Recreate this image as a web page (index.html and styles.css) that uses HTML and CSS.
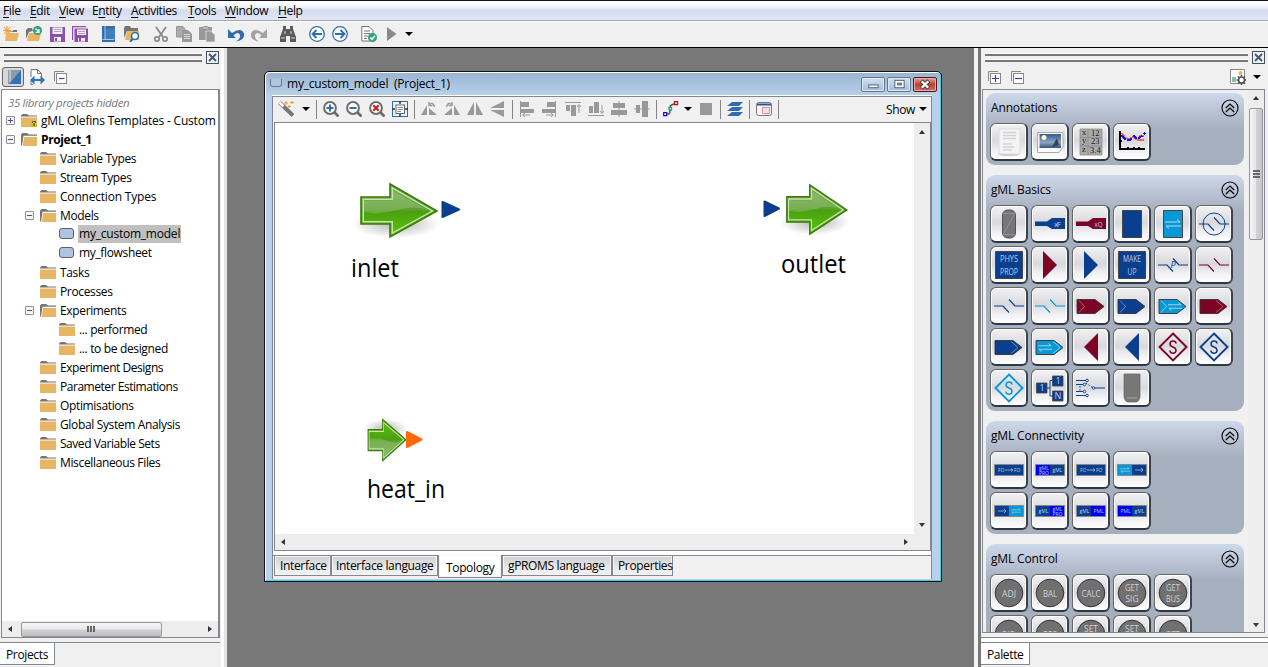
FILE: index.html
```html
<!DOCTYPE html>
<html lang="en">
<head>
<meta charset="utf-8">
<title>my_custom_model (Project_1)</title>
<link rel="stylesheet" href="styles.css">
</head>
<body>
<svg class="defs" width="0" height="0">
  <defs>
    <linearGradient id="green" x1="0" y1="0" x2="0" y2="1"><stop offset="0" stop-color="#7fb05f"/><stop offset=".48" stop-color="#5fa030"/><stop offset=".52" stop-color="#4aa010"/><stop offset="1" stop-color="#5fc40c"/></linearGradient>
    <radialGradient id="shade"><stop offset="0" stop-color="#000" stop-opacity=".5"/><stop offset="1" stop-color="#000" stop-opacity="0"/></radialGradient>
    <linearGradient id="sky" x1="0" y1="0" x2="0" y2="1"><stop offset="0" stop-color="#35588c"/><stop offset=".6" stop-color="#8ba5c5"/><stop offset="1" stop-color="#35517c"/></linearGradient>
  </defs>
  <symbol id="folder" viewBox="0 0 16 13"><path fill="#757575" d="M0 1.500 1.500 0H6L8 1.500H16V2.500H0z"/><path fill="#e8b565" d="M0 3.500H16V13H0z"/></symbol>
  <symbol id="folder-open" viewBox="0 0 16 13"><path fill="#757575" d="M0 1.500 1.500 0H6L8 1.500H16V2.800H2.500L1 12.500H0z"/><path fill="#e8b565" d="M3 4H16V13H1.800z"/></symbol>
  <symbol id="chev" viewBox="0 0 18 18"><circle cx="9" cy="9" r="8" fill="none" stroke="#000" stroke-width="1.100"/><path d="M4.800 9 9 5 13.200 9M4.800 13 9 9 13.200 13" fill="none" stroke="#000" stroke-width="1.200"/></symbol>
  <symbol id="arrow" viewBox="0 0 86 60"><ellipse cx="41" cy="44" rx="44" ry="14" fill="url(#shade)" opacity=".6"/><path d="M6 17H35V4L82 31 35 57V44H6z" fill="url(#green)" stroke="#3c7a0c" stroke-width="1.600"/><path d="M8.300 19.300H37.300V8L77.500 31 37.300 53V41.700H8.300z" fill="none" stroke="#c5e5af" stroke-width="1.400"/><path d="M9 32Q24 35 42 30T73 30L38 11V20.500H9z" fill="#fff" opacity=".16"/></symbol>
  <symbol id="ribbon" viewBox="0 0 30 30"><path d="M1 8.500H19L28 15.500 19 22.500H1z" fill="currentColor" stroke="#333" stroke-width=".9"/></symbol>
  <symbol id="swap" viewBox="0 0 16 10"><path d="M0 3H15M12 .5 15 3M16 7H1M4 9.500 1 7" fill="none" stroke="#b9d8e8" stroke-width="1"/></symbol>
  <symbol id="break" viewBox="0 0 30 30"><path d="M0 15H9L15 21.500M15 8.500 21 15H30" fill="none" stroke="currentColor" stroke-width="1.200"/></symbol>
  <symbol id="diamond" viewBox="0 0 30 30"><path d="M15 1.500 28.500 15 15 28.500 1.500 15z" fill="none" stroke="currentColor" stroke-width="1.900"/><path d="M18 11.500Q18 9 15 9 12 9 12 12 12 14 15 15 18 16 18 18.200 18 21.200 15 21.200 12 21.200 11.900 18.500" fill="none" stroke="currentColor" stroke-width="1.500"/></symbol>
</svg>

<nav class="menubar">
  <span><u>F</u>ile</span><span><u>E</u>dit</span><span><u>V</u>iew</span><span>E<u>n</u>tity</span><span><u>A</u>ctivities</span><span><u>T</u>ools</span><span><u>W</u>indow</span><span><u>H</u>elp</span>
</nav>

<div class="toolbar">
  <div class="tools">
    <svg viewBox="0 0 16 16"><path d="M5 5.500H9L10.500 4H14V6H5z" fill="#757575"/><path d="M3 7H16L14 15H2z" fill="#e8b565"/><path d="M4 0V9M0 4.500H8.500M1 1 7 8M7 1 1 8" stroke="#f0a030" stroke-width="1.100"/></svg>
    <svg viewBox="0 0 16 16"><path d="M0 13V4L2 2H6L7 5 3 6z" fill="#757575"/><path d="M3 7H15L13 15H1z" fill="#e8b565"/><circle cx="11.500" cy="4.500" r="4.500" fill="#2fa37c"/><path d="M9.500 2.500 13 6M13 3V6.300H9.700" stroke="#fff" stroke-width="1.200" fill="none"/></svg>
    <svg viewBox="0 0 16 16"><path d="M1 1H16V16H1z" fill="#8d4fae"/><path d="M3.500 1.500H13.500V8H3.500zM5 11H12V15.500H5z" fill="#f3edf6"/><path d="M5 3.500H12M5 5.500H12" stroke="#aaa"/><path d="M6 12H8V15H6z" fill="#8d4fae"/></svg>
    <svg viewBox="0 0 16 16"><path d="M0 0H14V1.200H1.200V14H0zM2.500 2.500H16V16H2.500z" fill="#8d4fae"/><path d="M5 3.500H14V9H5zM6 12H13V15.500H6z" fill="#f3edf6"/><path d="M6 5.500H13M6 7.500H13" stroke="#aaa"/><path d="M7 12H9V15H7z" fill="#8d4fae"/></svg>
  </div>
  <div class="tools">
    <svg viewBox="0 0 16 16"><path d="M1 0H14V16H1z" fill="#2e6eae"/><path d="M4.500 2.500H14V14H1.500V13H3.500z" fill="#3f7fbc"/><path d="M4 0V13M1.500 13.500H13" stroke="#cce0f2" stroke-width=".8"/></svg>
    <svg viewBox="0 0 16 16"><path d="M0 2V12L3 5H14V2H7L6 0H1z" fill="#757575"/><path d="M3 5H15V14H1z" fill="#e8b565"/><circle cx="11" cy="10" r="3.500" fill="#fff" stroke="#2e6eae" stroke-width="1.600"/><path d="M8.500 13 6 16" stroke="#2e6eae" stroke-width="2"/></svg>
  </div>
  <div class="tools gray">
    <svg viewBox="0 0 16 16"><path d="M3 1 10 11M13 1 6 11" stroke="#8a8a8a" stroke-width="1.800"/><circle cx="4" cy="13" r="2.200" fill="none" stroke="#8a8a8a" stroke-width="1.700"/><circle cx="12" cy="13" r="2.200" fill="none" stroke="#8a8a8a" stroke-width="1.700"/></svg>
    <svg viewBox="0 0 16 16"><path d="M.5.500H7L9 3V11H.5z" fill="#aaa" stroke="#999"/><path d="M6 4H12L16 8V16H6z" fill="#999"/><path d="M8 8.500H14M8 10.500H14M8 12.500H14" stroke="#ddd"/></svg>
    <svg viewBox="0 0 16 16"><path d="M0 1H3L5 0H8L10 1H13V14H0z" fill="#999"/><path d="M4 2H9" stroke="#ddd"/><path d="M7 5H12L16 9V16H7z" fill="#999" stroke="#eee" stroke-width=".7"/></svg>
  </div>
  <div class="tools">
    <svg viewBox="0 0 16 16"><path d="M0 3V12H8L5.500 9.500Q10 5 12 9 12.500 13 8 15.500 17 14 16 7.500 13 1 4 7z" fill="#2e6eae"/></svg>
    <svg viewBox="0 0 16 16"><path d="M16 3V12H8L10.500 9.500Q6 5 4 9 3.500 13 8 15.500-1 14 0 7.500 3 1 12 7z" fill="#a2a2a2"/></svg>
  </div>
  <div class="tools">
    <svg viewBox="0 0 16 16"><path d="M3 0H6V3H10V0H13V3L16 11V16H10V10H6V16H0V11L3 3z" fill="#5a5a5a"/><path d="M1 12H5M11 12H15M5 5V8M11 5V8" stroke="#d8d8d8"/></svg>
  </div>
  <div class="tools">
    <svg viewBox="0 0 16 16"><circle cx="8" cy="8" r="7.300" fill="#fff" stroke="#2e6eae" stroke-width="1.300"/><path d="M13 8H4M7.500 4 3.500 8 7.500 12" fill="none" stroke="#2e6eae" stroke-width="1.900"/></svg>
    <svg viewBox="0 0 16 16"><circle cx="8" cy="8" r="7.300" fill="#fff" stroke="#2e6eae" stroke-width="1.300"/><path d="M3 8H12M8.500 4 12.500 8 8.500 12" fill="none" stroke="#2e6eae" stroke-width="1.900"/></svg>
  </div>
  <div class="tools run">
    <svg viewBox="0 0 16 16"><path d="M.8.500H8L12 4.500V15H.8z" fill="#fff" stroke="#777"/><path d="M3 5H9M3 7.500H9M3 10H7M3 12.500H6" stroke="#777"/><circle cx="11.500" cy="11.500" r="4.500" fill="#2fa37c"/><path d="M9.300 11.500 11 13.300 14 9.800" stroke="#fff" stroke-width="1.500" fill="none"/></svg>
    <svg viewBox="0 0 16 16"><path d="M3 1V15L12.500 8z" fill="#8a8a8a"/></svg>
    <i class="drop"></i>
  </div>
</div>

<main class="workspace">
  <aside class="dock left">
    <div class="grip"><i></i><b><svg viewBox="0 0 9 9"><path d="M1 1 8 8M8 1 1 8" stroke="#4b5a70" stroke-width="2"/></svg></b></div>
    <div class="dock-tools">
      <span class="pressed"><svg viewBox="0 0 16 16"><path d="M2 1H15V15H2z" fill="#8e9aa8"/><path d="M15 1V15H3z" fill="#2e74b8"/><path d="M4 1V13" stroke="#dce6ef"/></svg></span>
      <svg viewBox="0 0 16 16"><path d="M2 8V.5H8.500L12.500 4.500V8M8.500.5V4.500H12.500M2 12V15.500H4" fill="#fff" stroke="#777"/><path d="M4 11H13" stroke="#2e74b8" stroke-width="2"/><path d="M5.500 6.500V15.500L1 11zM11.500 6.500V15.500L16 11z" fill="#2e74b8"/></svg>
      <svg viewBox="0 0 16 16"><path d="M2.500 12V2.500H12" fill="none" stroke="#888"/><rect x="4.500" y="4.500" width="10" height="10" fill="#fff" stroke="#888"/><path d="M7 9.500H12.500" stroke="#3d3da8" stroke-width="1.200"/></svg>
    </div>
    <div class="tree">
      <p class="hidden-note">35 library projects hidden</p>
      <ul>
        <li><i class="box plus"></i><svg class="f"><use href="#folder"/></svg><span class="wide">gML Olefins Templates - Custom</span><svg class="lock" viewBox="0 0 6 7"><path d="M1.500 3V1.500H4.500V3" fill="none" stroke="#555"/><path d="M0 3H6V7H0z" fill="#d8bc10"/><path d="M3 3.500V6" stroke="#222"/></svg></li>
        <li><i class="box"></i><svg class="f"><use href="#folder-open"/></svg><strong>Project_1</strong></li>
        <li class="l1"><svg class="f"><use href="#folder"/></svg><span>Variable Types</span></li>
        <li class="l1"><svg class="f"><use href="#folder"/></svg><span>Stream Types</span></li>
        <li class="l1"><svg class="f"><use href="#folder"/></svg><span class="wide">Connection Types</span></li>
        <li class="l1x"><i class="box"></i><svg class="f"><use href="#folder-open"/></svg><span>Models</span></li>
        <li class="l2"><i class="model"></i><span class="selected">my_custom_model</span></li>
        <li class="l2"><i class="model"></i><span>my_flowsheet</span></li>
        <li class="l1"><svg class="f"><use href="#folder"/></svg><span>Tasks</span></li>
        <li class="l1"><svg class="f"><use href="#folder"/></svg><span>Processes</span></li>
        <li class="l1x"><i class="box"></i><svg class="f"><use href="#folder-open"/></svg><span>Experiments</span></li>
        <li class="l2"><svg class="f"><use href="#folder"/></svg><span>... performed</span></li>
        <li class="l2"><svg class="f"><use href="#folder"/></svg><span>... to be designed</span></li>
        <li class="l1"><svg class="f"><use href="#folder"/></svg><span class="tight">Experiment Designs</span></li>
        <li class="l1"><svg class="f"><use href="#folder"/></svg><span class="tight">Parameter Estimations</span></li>
        <li class="l1"><svg class="f"><use href="#folder"/></svg><span>Optimisations</span></li>
        <li class="l1"><svg class="f"><use href="#folder"/></svg><span>Global System Analysis</span></li>
        <li class="l1"><svg class="f"><use href="#folder"/></svg><span class="tight">Saved Variable Sets</span></li>
        <li class="l1"><svg class="f"><use href="#folder"/></svg><span>Miscellaneous Files</span></li>
      </ul>
      <div class="hscroll"><i class="tri w"></i><b></b><i class="tri e"></i></div>
    </div>
    <div class="dock-tabs"><span>Projects</span></div>
  </aside>

  <section class="desktop">
    <div class="window">
      <header class="titlebar"><i class="win-icon"></i><h1>my_custom_model&nbsp; (Project_1)</h1>
        <div class="win-buttons">
          <b><svg viewBox="0 0 22 14"><rect x="6.500" y="7.500" width="10" height="3" fill="#fff" stroke="#4c586b"/></svg></b>
          <b><svg viewBox="0 0 22 14"><rect x="6.500" y="2.500" width="10" height="8" fill="#fff" stroke="#4c586b"/><rect x="9.500" y="5.500" width="4" height="2" fill="#9db7d4" stroke="#4c586b"/></svg></b>
          <b class="close"><svg viewBox="0 0 22 14"><path d="M7 3 15 11M15 3 7 11" stroke="#4c3a42" stroke-width="4.400"/><path d="M7.500 3.500 14.500 10.500M14.500 3.500 7.500 10.500" stroke="#fff" stroke-width="2.600"/></svg></b>
        </div>
      </header>
      <div class="frame">
        <div class="edit-tools">
          <div class="set wand">
            <svg viewBox="0 0 16 16"><path d="M1.500 1.500 15 14.500" stroke="#777" stroke-width="4"/><path d="M1.500 1.500 5.500 5.300" stroke="#fff" stroke-width="2.500"/><path d="M8 0V4M6 2H10M14 0V3M12 1.500H16M11 4V7M9.500 5.500H13" stroke="#efa030" stroke-width="1.200"/></svg><i class="drop"></i>
          </div>
          <div class="set">
            <svg viewBox="0 0 16 16"><circle cx="7" cy="7" r="5.900" fill="#fff" stroke="#6d6d6d" stroke-width="2"/><path d="M11 11 15.500 15.500" stroke="#6d6d6d" stroke-width="2.700"/><path d="M3.500 7H10.500M7 3.500V10.500" stroke="#2e6eae" stroke-width="2"/></svg>
            <svg viewBox="0 0 16 16"><circle cx="7" cy="7" r="5.900" fill="#fff" stroke="#6d6d6d" stroke-width="2"/><path d="M11 11 15.500 15.500" stroke="#6d6d6d" stroke-width="2.700"/><path d="M3.500 7H10.500" stroke="#2e6eae" stroke-width="2"/></svg>
            <svg viewBox="0 0 16 16"><circle cx="7" cy="7" r="5.900" fill="#fff" stroke="#6d6d6d" stroke-width="2"/><path d="M11 11 15.500 15.500" stroke="#6d6d6d" stroke-width="2.700"/><path d="M4.300 4.300 9.700 9.700M9.700 4.300 4.300 9.700" stroke="#c6251c" stroke-width="2.300"/></svg>
            <svg viewBox="0 0 16 16"><rect x=".5" y=".5" width="15" height="15" fill="#e8f0f8" stroke="#2e6eae"/><rect x="4" y="4" width="8.500" height="8.500" fill="#fff" stroke="#666"/><path d="M5.500 6.500H11M5.500 8.500H11M5.500 10.500H9" stroke="#888"/><path d="M8 0V3M8 13V16M0 8H3M13 8H16" stroke="#333" stroke-width="1.500"/></svg>
          </div>
          <div class="set g">
            <svg viewBox="0 0 16 16"><path d="M0 14 6 4V14zM8 14V7L16 14z"/><path d="M8 4Q12 0 13.500 6M8 1V4.500H11.500" fill="none" stroke="#999" stroke-width="1.400"/></svg>
            <svg viewBox="0 0 16 16"><path d="M16 14 10 4V14zM8 14V7L0 14z"/><path d="M8 4Q4 0 2.500 6M8 1V4.500H4.500" fill="none" stroke="#999" stroke-width="1.400"/></svg>
            <svg viewBox="0 0 16 16"><path d="M0 14 7 1V14zM9 14V1L16 14z"/></svg>
            <svg viewBox="0 0 16 16"><path d="M0 7 14 0V7zM0 9 14 16V9z"/></svg>
          </div>
          <div class="set g">
            <svg viewBox="0 0 16 16"><path d="M1 0H2V16H1zM2 1H10V6H2zM2 8H15V12H2z"/><path d="M11 14H4M6 12 3.500 14 6 16" fill="none" stroke="#999"/></svg>
            <svg viewBox="0 0 16 16"><path d="M13 0H14V16H13zM5 1H13V6H5zM0 8H13V12H0z"/><path d="M4 14H11M9 12 11.500 14 9 16" fill="none" stroke="#999"/></svg>
            <svg viewBox="0 0 16 16"><path d="M0 1H16V2H0zM1 4H5V10H1zM6 4H11V15H6z"/><path d="M14 12V4M12 6 14 3.500 16 6" fill="none" stroke="#999"/></svg>
            <svg viewBox="0 0 16 16"><path d="M0 14H16V15H0zM1 5H5V12H1zM6 1H11V12H6z"/><path d="M14 4V12M12 10 14 12.500 16 10" fill="none" stroke="#999"/></svg>
            <svg viewBox="0 0 16 16"><path d="M2 2H14V7H2zM0 9H16V14H0zM7.500 0H8.500V16H7.500z"/></svg>
            <svg viewBox="0 0 16 16"><path d="M2 4H6V12H2zM8 0H14V16H8zM0 7.500H16V8.500H0z"/></svg>
          </div>
          <div class="set line">
            <svg viewBox="0 0 16 16"><path d="M3 13H6Q7 12 7 10V6Q7 4 11 3" fill="none" stroke="#555" stroke-width="1.500"/><path d="M.7 11.700H3.700V14.700H.7z" fill="#fff" stroke="#1515b0" stroke-width="1.300"/><path d="M11.500.7H14.500V3.700H11.500z" fill="#fff" stroke="#b01010" stroke-width="1.300"/><path d="M6 6.500H8.500V9H6z" fill="#fff" stroke="#2fa37c" stroke-width="1.300"/></svg><i class="drop"></i>
            <svg viewBox="0 0 16 16"><path d="M3 2H15V14H3z" fill="#999"/></svg>
          </div>
          <div class="set"><svg viewBox="0 0 16 16"><path d="M5 1H16L12 5H0zM5 6H16L12 10H0zM5 11H16L12 15H0z" fill="#2e6eae"/></svg></div>
          <div class="set"><svg viewBox="0 0 16 16"><rect x=".5" y="1.500" width="15" height="13" rx="2" fill="#f6f6f6" stroke="#777"/><path d="M1 2.500H15V4.500H1z" fill="#2255a0"/><path d="M6.500 6.500H13.500V12.500H6.500z" fill="#f8e0e0" stroke="#d89090"/></svg></div>
          <div class="show">Show<i class="drop"></i></div>
        </div>
        <div class="canvas-box">
          <div class="canvas">
            <svg class="topology" viewBox="275 123 639 411">
              <use href="#arrow" x="355" y="180" width="86" height="60"/>
              <path d="M442.500 202 459 209.500 442.500 217z" fill="#0a3f8f" stroke="#0a3f8f" stroke-width="2" stroke-linejoin="round"/>
              <text x="351" y="276.500" textLength="48" lengthAdjust="spacingAndGlyphs">inlet</text>
              <path d="M764.500 201.500 779 208.500 764.500 216z" fill="#0a3f8f" stroke="#0a3f8f" stroke-width="2" stroke-linejoin="round"/>
              <svg x="782" y="181" width="68" height="56" viewBox="0 0 86 60" preserveAspectRatio="none"><use href="#arrow" width="86" height="60"/></svg>
              <text x="781" y="272.500" textLength="65" lengthAdjust="spacingAndGlyphs">outlet</text>
              <g transform="translate(365 464) scale(1 -1)"><svg width="43" height="47" viewBox="0 0 86 60" preserveAspectRatio="none"><use href="#arrow" width="86" height="60"/></svg></g>
              <path d="M407 432 421.500 439.500 407 447z" fill="#ff6a08" stroke="#ff6a08" stroke-width="2" stroke-linejoin="round"/>
              <text x="367" y="497.500" textLength="78" lengthAdjust="spacingAndGlyphs">heat_in</text>
            </svg>
            <div class="vscroll"><i class="tri n"></i><i class="tri s"></i></div>
          </div>
          <div class="hscroll"><i class="tri w"></i><i class="tri e"></i></div>
        </div>
        <div class="sheet-tabs"><span class="t1">Interface</span><span class="t2">Interface language</span><span class="on">Topology</span><span class="t4">gPROMS language</span><span class="t5">Properties</span></div>
      </div>
    </div>
  </section>

  <aside class="dock right">
    <div class="grip"><i></i><b><svg viewBox="0 0 9 9"><path d="M1 1 8 8M8 1 1 8" stroke="#4b5a70" stroke-width="2"/></svg></b></div>
    <div class="dock-tools">
      <svg viewBox="0 0 16 16"><path d="M2.500 12V2.500H12" fill="none" stroke="#888"/><rect x="4.500" y="4.500" width="10" height="10" fill="#fff" stroke="#888"/><path d="M6 9.500H13M9.500 6V13" stroke="#3d3da8" stroke-width="1.200"/></svg>
      <svg viewBox="0 0 16 16"><path d="M2.500 12V2.500H12" fill="none" stroke="#888"/><rect x="4.500" y="4.500" width="10" height="10" fill="#fff" stroke="#888"/><path d="M6 9.500H13" stroke="#3d3da8" stroke-width="1.200"/></svg>
      <svg class="cfg" viewBox="0 0 16 16"><path d="M.5.500H14.500V14.500H.5z" fill="#fff" stroke="#888"/><path d="M2 8H6V13H2z" fill="#7fc8aa"/><circle cx="10.500" cy="4" r="2" fill="#efb45c"/><circle cx="11.500" cy="11" r="3" fill="#fff" stroke="#555" stroke-width="1.600"/><path d="M11.500 6V8M11.500 14V16M6.500 11H8.500M14.500 11H16.500M8 7.500 9.500 9M13.500 13 15 14.500M15 7.500 13.500 9M9.500 13 8 14.500" stroke="#555" stroke-width="1.500"/></svg><i class="drop"></i>
    </div>
    <div class="palette">
      <div class="groups">
        <section class="group"><h2>Annotations<svg><use href="#chev"/></svg></h2><div class="grid">
          <b><svg viewBox="0 0 30 30"><ellipse cx="15" cy="27" rx="11" ry="2" fill="#ccc"/><rect x="5" y="2" width="21" height="25" fill="#f3f3f3" stroke="#ddd"/><path d="M9 5.500H22M9 8.500H22M9 11.500H22M9 17H18M9 20H20M9 23H18" stroke="#d3d3d3" stroke-width="1.500"/></svg></b>
          <b><svg viewBox="0 0 30 30"><path d="M2.500 5.500H28V20L24 25.500H2.500z" fill="#fafafa" stroke="#aaa"/><path d="M4.500 7H26V21H4.500z" fill="url(#sky)"/><circle cx="9" cy="10.500" r="2.500" fill="#fff8c0"/><path d="M17 20 22 11 24 18z" fill="#34434e"/></svg></b>
          <b><svg viewBox="0 0 30 30"><path d="M4 2H26V28H4z" fill="#aaa" stroke="#888" stroke-width=".7"/><path d="M4 10.500H26M4 19H26M12 2V28" stroke="#888" stroke-width=".8"/><g class="cells"><text x="6" y="8">x</text><text x="15" y="9">12</text><text x="6" y="16">y</text><text x="15" y="17">23</text><text x="6" y="25">z</text><text x="14" y="26">3.4</text></g></svg></b>
          <b><svg viewBox="0 0 30 30"><path d="M3 4V22H28M3 9H5M3 14H5M11 22V20M17 22V20M22 22V20" fill="none" stroke="#000" stroke-width="2"/><g shape-rendering="crispEdges" fill="none"><path d="M5 6 8 11 12 12 16 10 21 13 27 13M22 9H27" stroke="#f8654a" stroke-width="2"/><path d="M5 9 9 13 13 13 17 9 20 12 25 9 28 6" stroke="#1010ff" stroke-width="2" stroke-dasharray="5 2"/></g></svg></b>
        </div></section>

        <section class="group"><h2>gML Basics<svg><use href="#chev"/></svg></h2><div class="grid">
          <b><svg viewBox="0 0 30 30"><rect x="8.500" y="1" width="13" height="28" rx="5" fill="#777" stroke="#555"/><path d="M9 4.500H21L9 25.500H21" fill="none" stroke="#999" stroke-width=".8"/></svg></b>
          <b><svg viewBox="0 0 30 30"><path d="M0 12.500H12L17 9H30V20H17L12 17H0z" fill="#0a3f8f"/><text class="lt" x="19" y="17.500" textLength="7" font-size="8">xF</text></svg></b>
          <b><svg viewBox="0 0 30 30"><path d="M0 12.500H12L17 9H30V20H17L12 17H0z" fill="#7c0425"/><text class="lt" x="18.500" y="17.500" textLength="8" lengthAdjust="spacingAndGlyphs" font-size="8">xQ</text></svg></b>
          <b><svg viewBox="0 0 30 30"><path d="M5.500 1.500H24.500V28.500H5.500z" fill="#0a3f8f" stroke="#444"/></svg></b>
          <b><svg viewBox="0 0 30 30"><path d="M5.500 1.500H24.500V28.500H5.500z" fill="#0898d8" stroke="#444"/><use href="#swap" x="7" y="10" width="16" height="10"/></svg></b>
          <b class="navy"><svg viewBox="0 0 30 30"><use href="#break" width="30" height="30"/><circle cx="15" cy="15" r="11" fill="none" stroke="#0a3f8f"/></svg></b>
          <b><svg viewBox="0 0 30 30"><path d="M1.500 1.500H28.500V28.500H1.500z" fill="#0a3f8f" stroke="#444"/><text class="lt" x="6" y="12" textLength="18" lengthAdjust="spacingAndGlyphs" font-size="9">PHYS</text><text class="lt" x="6" y="25" textLength="18" lengthAdjust="spacingAndGlyphs" font-size="9">PROP</text></svg></b>
          <b><svg viewBox="0 0 30 30"><path d="M8 1 22 15 8 29z" fill="#7c0425"/></svg></b>
          <b><svg viewBox="0 0 30 30"><path d="M8 1 22 15 8 29z" fill="#0a3f8f"/></svg></b>
          <b><svg viewBox="0 0 30 30"><path d="M1.500 1.500H28.500V28.500H1.500z" fill="#0a3f8f" stroke="#444"/><text class="lt" x="6" y="12" textLength="18" lengthAdjust="spacingAndGlyphs" font-size="9">MAKE</text><text class="lt" x="10.500" y="25" textLength="9" lengthAdjust="spacingAndGlyphs" font-size="9">UP</text></svg></b>
          <b class="navy"><svg viewBox="0 0 30 30"><use href="#break" width="30" height="30"/><text x="12.500" y="18" font-size="9" fill="#0a3f8f" font-style="italic">P</text></svg></b>
          <b class="wine"><svg><use href="#break"/></svg></b>
          <b class="navy"><svg><use href="#break"/></svg></b>
          <b class="sky"><svg><use href="#break"/></svg></b>
          <b class="wine"><svg viewBox="0 0 30 30"><use href="#ribbon" width="30" height="30"/><path d="M3 9.500 8.500 15.500 3 21.500" fill="none" stroke="#c07085" stroke-width=".8"/></svg></b>
          <b class="navy"><svg viewBox="0 0 30 30"><use href="#ribbon" width="30" height="30"/><path d="M3 9.500 8.500 15.500 3 21.500" fill="none" stroke="#7ca0d0" stroke-width=".8"/></svg></b>
          <b class="sky"><svg viewBox="0 0 30 30"><use href="#ribbon" width="30" height="30"/><path d="M3 9.500 8.500 15.500 3 21.500" fill="none" stroke="#b0d8e8" stroke-width=".8"/><use href="#swap" x="10" y="11" width="14" height="9"/></svg></b>
          <b class="wine"><svg viewBox="0 0 30 30"><use href="#ribbon" width="30" height="30"/><path d="M17 9.500 24 15.500 17 21.500" fill="none" stroke="#c07085" stroke-width=".8"/></svg></b>
          <b class="navy"><svg viewBox="0 0 30 30"><use href="#ribbon" width="30" height="30"/><path d="M17 9.500 24 15.500 17 21.500" fill="none" stroke="#7ca0d0" stroke-width=".8"/></svg></b>
          <b class="sky"><svg viewBox="0 0 30 30"><use href="#ribbon" width="30" height="30"/><path d="M18 9.500 25 15.500 18 21.500" fill="none" stroke="#b0d8e8" stroke-width=".8"/><use href="#swap" x="3" y="11" width="14" height="9"/></svg></b>
          <b><svg viewBox="0 0 30 30"><path d="M22 1 8 15 22 29z" fill="#7c0425"/></svg></b>
          <b><svg viewBox="0 0 30 30"><path d="M22 1 8 15 22 29z" fill="#0a3f8f"/></svg></b>
          <b class="wine"><svg><use href="#diamond"/></svg></b>
          <b class="navy"><svg><use href="#diamond"/></svg></b>
          <b class="sky"><svg><use href="#diamond"/></svg></b>
          <b><svg viewBox="0 0 30 30"><path d="M12 15H15M18 7.500H15V23H18" fill="none" stroke="#0a3f8f"/><path d="M1.500 10H12V20H1.500zM17.500 3H28V13H17.500zM17.500 18H28V28H17.500z" fill="#0a3f8f" stroke="#444" stroke-width=".8"/><text class="lt" x="4.500" y="18.300" font-size="9">1</text><text class="lt" x="20.500" y="11.300" font-size="9">1</text><text class="lt" x="19.500" y="26.300" font-size="9">N</text></svg></b>
          <b><svg viewBox="0 0 30 30"><path d="M0 7.500H10M0 11.500H7M0 18.500H7M0 22.500H10M19 15H29" stroke="#0a3f8f" stroke-width="1.100"/><path d="M10 10 17 15M4 13V18" stroke="#0a3f8f" stroke-dasharray="1.500 1.500"/><g fill="#fff" stroke="#0a3f8f"><circle cx="11" cy="7.500" r="1.300"/><circle cx="8.500" cy="11.500" r="1.300"/><circle cx="8.500" cy="18.500" r="1.300"/><circle cx="11" cy="22.500" r="1.300"/><circle cx="17.500" cy="15" r="1.300"/></g></svg></b>
          <b><svg viewBox="0 0 30 30"><path d="M7 1H23V24Q22 29 19 29H11Q8 29 7 24z" fill="#777" stroke="#666" stroke-width=".7"/><path d="M10 25H20" stroke="#aaa"/></svg></b>
        </div></section>

        <section class="group"><h2>gML Connectivity<svg><use href="#chev"/></svg></h2><div class="grid conn">
          <b><svg viewBox="0 0 30 30"><path d="M.5 9.500H29.500V20.500H.5z" fill="#0a3f8f" stroke="#888"/><text class="lt" x="4" y="17" font-size="5">FO</text><text class="lt" x="20" y="17" font-size="5">FO</text><path d="M11 15H19M17 13.500 19 15 17 16.500" fill="none" stroke="#9db8dc" stroke-width=".8"/></svg></b>
          <b><svg viewBox="0 0 30 30"><path d="M.5 9.500H29.500V20.500H.5z" fill="#0a3f8f" stroke="#888"/><path d="M1 10H15V20H1z" fill="#0000f8"/><text class="lt" x="4" y="14.500" font-size="5">gML</text><text class="lt" x="4" y="19.500" font-size="5">PRO</text><text class="lt" x="17.500" y="17" font-size="5">gML</text></svg></b>
          <b><svg viewBox="0 0 30 30"><path d="M.5 9.500H29.500V20.500H.5z" fill="#0a3f8f" stroke="#888"/><text class="lt" x="4" y="17" font-size="5">FO</text><text class="lt" x="20" y="17" font-size="5">FO</text><path d="M11 15H19M17 13.500 19 15 17 16.500" fill="none" stroke="#9db8dc" stroke-width=".8"/></svg></b>
          <b><svg viewBox="0 0 30 30"><path d="M.5 9.500H29.500V20.500H.5z" fill="#0a3f8f" stroke="#888"/><path d="M1 10H15V20H1z" fill="#0898d8"/><use href="#swap" x="3" y="12" width="10" height="6"/><path d="M18 15H26M24 13 26 15 24 17" fill="none" stroke="#9db8dc" stroke-width=".8"/></svg></b>
          <b><svg viewBox="0 0 30 30"><path d="M.5 9.500H29.500V20.500H.5z" fill="#0a3f8f" stroke="#888"/><path d="M15 10H29V20H15z" fill="#0898d8"/><use href="#swap" x="17" y="12" width="10" height="6"/><path d="M4 15H12M10 13 12 15 10 17" fill="none" stroke="#9db8dc" stroke-width=".8"/></svg></b>
          <b><svg viewBox="0 0 30 30"><path d="M.5 9.500H29.500V20.500H.5z" fill="#0a3f8f" stroke="#888"/><path d="M15 10H29V20H15z" fill="#0000f8"/><text class="lt" x="3.500" y="17" font-size="5">gML</text><text class="lt" x="17.500" y="14.500" font-size="5">gML</text><text class="lt" x="17.500" y="19.500" font-size="5">PRO</text></svg></b>
          <b><svg viewBox="0 0 30 30"><path d="M.5 9.500H29.500V20.500H.5z" fill="#0a3f8f" stroke="#888"/><path d="M15 10H29V20H15z" fill="#0000f8"/><text class="lt" x="3.500" y="17" font-size="5">gML</text><text class="lt" x="17.500" y="17" font-size="5">PML</text></svg></b>
          <b><svg viewBox="0 0 30 30"><path d="M.5 9.500H29.500V20.500H.5z" fill="#0a3f8f" stroke="#888"/><path d="M1 10H15V20H1z" fill="#0000f8"/><text class="lt" x="3.500" y="17" font-size="5">PML</text><text class="lt" x="17.500" y="17" font-size="5">gML</text></svg></b>
        </div></section>

        <section class="group"><h2>gML Control<svg><use href="#chev"/></svg></h2><div class="grid">
          <b><svg viewBox="0 0 30 30"><circle class="disc" cx="15" cy="15" r="13.800"/><text class="dt" x="8" y="18.800" textLength="14" lengthAdjust="spacingAndGlyphs">ADJ</text></svg></b>
          <b><svg viewBox="0 0 30 30"><circle class="disc" cx="15" cy="15" r="13.800"/><text class="dt" x="8" y="18.800" textLength="14" lengthAdjust="spacingAndGlyphs">BAL</text></svg></b>
          <b><svg viewBox="0 0 30 30"><circle class="disc" cx="15" cy="15" r="13.800"/><text class="dt" x="5.500" y="18.800" textLength="19" lengthAdjust="spacingAndGlyphs">CALC</text></svg></b>
          <b><svg viewBox="0 0 30 30"><circle class="disc" cx="15" cy="15" r="13.800"/><text class="dt" x="8" y="13.300" textLength="14" lengthAdjust="spacingAndGlyphs">GET</text><text class="dt" x="8.500" y="23.800" textLength="13" lengthAdjust="spacingAndGlyphs">SIG</text></svg></b>
          <b><svg viewBox="0 0 30 30"><circle class="disc" cx="15" cy="15" r="13.800"/><text class="dt" x="8" y="13.300" textLength="14" lengthAdjust="spacingAndGlyphs">GET</text><text class="dt" x="8" y="23.800" textLength="14" lengthAdjust="spacingAndGlyphs">BUS</text></svg></b>
          <i class="gap"></i>
          <b><svg viewBox="0 0 30 30"><circle class="disc" cx="15" cy="15" r="13.800"/><text class="dt" x="8" y="18.800" textLength="14" lengthAdjust="spacingAndGlyphs">PID</text></svg></b>
          <b><svg viewBox="0 0 30 30"><circle class="disc" cx="15" cy="15" r="13.800"/><text class="dt" x="8" y="18.800" textLength="14" lengthAdjust="spacingAndGlyphs">RES</text></svg></b>
          <b><svg viewBox="0 0 30 30"><circle class="disc" cx="15" cy="15" r="13.800"/><text class="dt" x="8" y="13.300" textLength="14" lengthAdjust="spacingAndGlyphs">SET</text></svg></b>
          <b><svg viewBox="0 0 30 30"><circle class="disc" cx="15" cy="15" r="13.800"/><text class="dt" x="8" y="13.300" textLength="14" lengthAdjust="spacingAndGlyphs">SET</text></svg></b>
          <b><svg viewBox="0 0 30 30"><circle class="disc" cx="15" cy="15" r="13.800"/><text class="dt" x="8" y="18.800" textLength="14" lengthAdjust="spacingAndGlyphs">SET</text></svg></b>
        </div></section>
      </div>
      <div class="vscroll"><i class="tri n"></i><b></b><i class="tri s"></i></div>
    </div>
    <div class="dock-tabs"><span>Palette</span></div>
  </aside>
</main>
</body>
</html>
```
FILE: styles.css
```css
* { box-sizing: border-box; }
body { margin: 0; width: 1268px; height: 667px; overflow: hidden; display: flex; flex-direction: column; background: #f0f0f0; color: #000; font: 12px/19px "Open Sans", "Noto Sans", sans-serif; letter-spacing: -.35px; }
i, b { display: block; font-style: normal; font-weight: 400; }
ul, p, h1, h2 { margin: 0; padding: 0; font-weight: 400; font-size: inherit; }
svg { display: block; flex: none; }
.defs { position: absolute; }
.drop { width: 0; height: 0; border: 4px solid transparent; border-top: 4px solid #000; border-bottom: 0; flex: none; }

.menubar { height: 21px; flex: none; display: grid; grid-template-columns: 27px 29px 33px 39px 57px 37px 53px 40px; padding-left: 3px; line-height: 20px; border-top: 1px solid #15101c; border-bottom: 1px solid #a5a5aa; background: linear-gradient(#fff, #f2f4fa 30%, #d5dcee 50%, #e2e6f5); }
.menubar u { text-underline-offset: 2px; }
.toolbar { height: 27px; flex: none; display: flex; align-items: center; gap: 13px; padding: 0 0 2px 3px; border-bottom: 1px solid #000; border-top: 1px solid #fff; }
.tools { display: flex; gap: 7px; align-items: center; }
.tools svg, .set svg, .dock-tools svg { width: 16px; height: 16px; }
.run .drop { margin-left: -2px; }

.workspace { flex: 1; display: flex; min-height: 0; }
.dock { display: flex; flex-direction: column; background: #f0f0f0; flex: none; }
.left { width: 227px; border-right: 3px solid #e4e4e4; box-shadow: inset -3px 0 #fff; padding-top: 2px; }
.right { width: 294px; border-left: 4px solid #f4f4f4; box-shadow: inset 3px 0 #777; padding: 2px 4px 0 7px; }
.grip { height: 14px; display: flex; align-items: center; justify-content: space-between; padding: 0 5px 0 4px; flex: none; }
.grip i { width: 198px; height: 9px; border-top: 1px solid #fff; border-bottom: 2px solid #777; background: linear-gradient(#777 2px, transparent 2px, transparent 5px, #fff 5px); }
.right .grip { padding: 0; margin-right: -1px; }
.right .grip i { width: 263px; }
.grip b { width: 13px; height: 13px; border: 1px solid #45515e; background: #eef3f6; padding: 1px; }
.grip svg { width: 9px; height: 9px; }
.dock-tools { height: 25px; flex: none; display: flex; align-items: center; gap: 7px; padding-left: 2px; }
.left .dock-tools { gap: 5px; }
.left .dock-tools svg:last-child { margin-left: 2px; }
.right .dock-tools { padding: 0 3px 0 1px; }
.dock-tools .cfg { margin-left: auto; }
.pressed { width: 22px; height: 20px; border: 1px solid #666; border-radius: 3px; background: #d8d8d8; display: grid; place-items: center; }

.tree { height: 549px; width: 219px; margin-left: 1px; flex: none; background: #fff; border: 1px solid #828790; border-right-width: 2px; display: flex; flex-direction: column; overflow: hidden; }
.hidden-note { height: 21px; line-height: 25px; padding-left: 6px; font-size: 11.500px; font-style: italic; color: #777; letter-spacing: -.35px; }
ul { flex: 1; list-style: none; }
li { height: 19px; display: flex; align-items: center; padding-left: 5px; position: relative; white-space: nowrap; }
li .f { width: 16px; height: 13px; margin-right: 4px; }
li strong { letter-spacing: -.4px; }
.wide { letter-spacing: -.2px; }
.tight { letter-spacing: -.46px; }
.l1 { padding-left: 38px; }
.l1x { padding-left: 23px; }
.l2 { padding-left: 57px; }
.box { width: 9px; height: 9px; margin-right: 6px; border: 1px solid #919191; border-radius: 1px; background: linear-gradient(#4455a0, #4455a0) center / 5px 1px no-repeat, #f5f5f5; }
li:nth-child(-n+2) .box { margin-left: -1px; }
.plus { background: linear-gradient(#4455a0, #4455a0) center / 5px 1px no-repeat, linear-gradient(#4455a0, #4455a0) center / 1px 5px no-repeat, #f5f5f5; }
.model { width: 15px; height: 11px; border: 1px solid #5a6070; border-radius: 3px; background: #b0c3e0; margin: -2px 4px 0 0; }
.l2 .model + span { padding: 0 1px; height: 18px; line-height: 18px; margin-top: -1px; }
.l2 .selected { background: #c0c0c0; letter-spacing: -.22px; padding-right: 2px; }
.lock { position: absolute; left: 29px; top: 9px; width: 6px; height: 7px; }

.hscroll { height: 16px; flex: none; display: flex; align-items: center; padding: 0 6px; background: #ededed; justify-content: space-between; }
.tree .hscroll { padding: 0 6px; }
.tree .hscroll b { width: 141px; height: 15px; margin: 0 42px 0 4px; border: 1px solid #979797; border-radius: 2px; background: linear-gradient(90deg, #666 2px, transparent 2px 3px, #666 3px 5px, transparent 5px 6px, #666 6px 8px) center / 8px 6px no-repeat, linear-gradient(#f5f5f5, #e8e8e8 48%, #d0d1d4 52%, #bfc0c4); }
.tri { border: 3px solid transparent; width: 0; height: 0; flex: none; }
.w { border-right: 4px solid #333; border-left: 0; }
.e { border-left: 4px solid #333; border-right: 0; }
.n { border-bottom: 4px solid #333; border-top: 0; }
.s { border-top: 4px solid #333; border-bottom: 0; }
.vscroll { width: 16px; flex: none; background: #ededed; display: flex; flex-direction: column; align-items: center; justify-content: space-between; padding: 7px 0; }

.dock-tabs { margin-top: 4px; height: 23px; border-top: 1px solid #828790; flex: none; display: flex; align-items: start; }
.left .dock-tabs { width: 220px; }
.dock-tabs span { height: 22px; line-height: 23px; background: #fff; border-right: 1px solid #828790; border-bottom: 1px solid #828790; width: 55px; padding-left: 6px; }

.desktop { flex: 1; background: #787878; padding: 23px 32px 0 37px; min-width: 0; }
.window { width: 678px; height: 511px; border: 1px solid #111; border-radius: 5px 5px 0 0; background: linear-gradient(#99b4d1, #b9d1ea 24px); padding: 0 9px 2px 7px; box-shadow: inset 1px 1px #fff, inset -1px -1px #40d0e8; display: flex; flex-direction: column; }
.titlebar { height: 24px; flex: none; display: flex; align-items: center; }
.titlebar h1 { font-size: 12px; margin-left: 5px; letter-spacing: -.22px; margin-top: -1px; }
.win-icon { width: 12px; height: 8px; margin: -3px 0 0 -2px; border: 1px solid #707888; border-top: 0; background: #b5c5dd; border-radius: 0 0 3px 3px; }
.win-buttons { margin-left: auto; display: flex; gap: 2px; margin-right: -5px; }
.win-buttons b { width: 24px; height: 15px; border: 1px solid #65788f; border-radius: 2px; background: linear-gradient(#d0e0f0, #a5bdd8); box-shadow: inset 0 0 0 1px #dce9f5; }
.win-buttons svg { width: 22px; height: 13px; }
.win-buttons .close { background: linear-gradient(#dda79c, #b94331 50%, #d47360); border-color: #501825; box-shadow: inset 0 0 0 1px #e6aaa0; }
.frame { flex: 1; min-height: 0; background: #f0f0f0; border: 1px solid #828790; border-bottom: 0; box-shadow: 0 -1px #fff; display: flex; flex-direction: column; }
.edit-tools { height: 25px; flex: none; display: flex; align-items: center; padding: 0 0 1px 5px; }
.set { display: flex; align-items: center; gap: 7px; height: 19px; padding-right: 6px; margin-right: 6px; border-right: 1px solid #858585; }
.g { fill: #999; }
.wand { gap: 8px; }
.line .drop { margin-left: -2px; }
.line { gap: 7px; padding-right: 7px; }
.line svg:last-child { margin-left: -2px; }
.show { margin-left: auto; padding-right: 4px; display: flex; align-items: center; gap: 4px; }
.canvas-box { height: 429px; margin-left: 1px; flex: none; border: 1px solid #828790; display: flex; flex-direction: column; background: #fff; }
.canvas { flex: 1; display: flex; justify-content: space-between; min-height: 0; }
.topology { width: 639px; height: 411px; font-size: 25px; letter-spacing: 0; }
.canvas-box .hscroll { padding: 0 22px 0 6px; }
.sheet-tabs { flex: 1; display: flex; align-items: start; border-top: 1px solid #828790; margin-top: 4px; padding-left: 1px; box-shadow: 0 -4px #fff; }
.sheet-tabs span { height: 20px; line-height: 20px; border: 1px solid #828790; border-top: 0; background: linear-gradient(#d0d0d0, #f0f0f0 80%); white-space: nowrap; padding-left: 5px; box-shadow: inset 0 0 0 1px #f5f5f5; }
.sheet-tabs .t1 { width: 57px; }
.sheet-tabs .t2 { width: 107px; padding-left: 4px; }
.sheet-tabs .on { width: 64px; height: 23px; margin-top: -1px; line-height: 25px; background: #fff; padding-left: 7px; }
.sheet-tabs .t4 { width: 110px; }
.sheet-tabs .t5 { width: 61px; }

.palette { width: 283px; height: 544px; flex: none; border: 1px solid #828790; display: flex; justify-content: space-between; overflow: hidden; }
.right .palette { margin-left: -3px; }
.right .dock-tabs { margin: 4px 0 0 -4px; width: 288px; padding-top: 4px; height: 29px; border-top: 1px solid #828790; background: linear-gradient(#fff 4px, #828790 4px, #828790 5px, transparent 5px); }
.right .dock-tabs span { margin-top: 1px; width: 49px; height: 22px; }
.groups { width: 258px; margin: 3px 0 0 3px; display: flex; flex-direction: column; gap: 10px; }
.group { flex: none; padding: 0 4px 4px; border-radius: 9px; background: linear-gradient(#cdd8ea, #a6afbe 36px); }
.group h2 { height: 30px; line-height: 30px; padding: 0 1px; display: flex; justify-content: space-between; align-items: center; letter-spacing: -.15px; }
.group h2 svg { width: 18px; height: 18px; }
.grid { display: grid; grid-template-columns: repeat(6, 38px); gap: 3px; }
.grid.conn { grid-template-columns: repeat(4, 38px); }
.grid b { width: 38px; height: 38px; padding: 3px; border: 1px solid #666; border-width: 1px 2px 2px 1px; border-right-color: #3c434e; border-bottom-color: #303744; border-radius: 6px; background: linear-gradient(#f2f2f4, #d8d9dc 48%, #f0f0f4 75%, #fff); box-shadow: inset 0 0 0 1px #fff; }
.grid b svg { width: 30px; height: 30px; }
.cells { font: 8.500px "Liberation Serif", serif; fill: #222; letter-spacing: 0; }
.navy { color: #0a3f8f; }
.wine { color: #7c0425; }
.sky { color: #0898d8; }
.lt { fill: #b8cce8; letter-spacing: 0; }
.disc { fill: #707070; stroke: #333; }
.dt { fill: #d0d0d0; font-size: 9px; letter-spacing: 0; }
.palette .vscroll { padding-bottom: 5px; padding-top: 6px; width: 16px; }
.palette .vscroll b { width: 14px; height: 132px; margin: 8px 0 auto; border: 1px solid #979797; border-radius: 2px; background: linear-gradient(#666 2px, transparent 2px 3px, #666 3px 5px, transparent 5px 6px, #666 6px 8px) center / 7px 8px no-repeat, linear-gradient(90deg, #f5f5f5, #e8e8e8 48%, #d0d1d4 52%, #c6c7ca); }
```
